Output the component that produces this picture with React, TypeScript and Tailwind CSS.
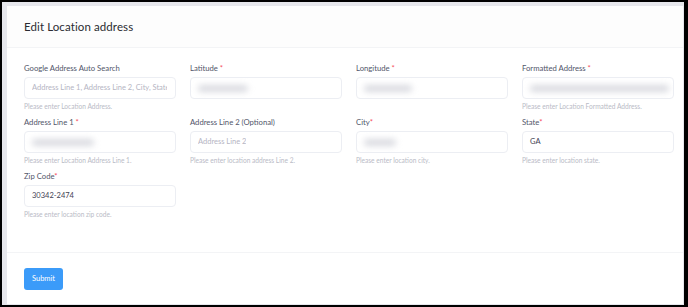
import React from "react";

type Field = {
  label: string;
  req?: "space" | "tight";
  placeholder?: string;
  value?: string;
  blur?: number;
  help?: string;
};

const rows: Field[][] = [
  [
    { label: "Google Address Auto Search", placeholder: "Address Line 1, Address Line 2, City, State", help: "Please enter Location Address." },
    { label: "Latitude", req: "space", blur: 50 },
    { label: "Longitude", req: "space", blur: 48 },
    { label: "Formatted Address", req: "space", blur: 139, help: "Please enter Location Formatted Address." },
  ],
  [
    { label: "Address Line 1", req: "space", blur: 62, help: "Please enter Location Address Line 1." },
    { label: "Address Line 2 (Optional)", placeholder: "Address Line 2", help: "Please enter location address Line 2." },
    { label: "City", req: "tight", blur: 32, help: "Please enter location city." },
    { label: "State", req: "tight", value: "GA", help: "Please enter location state." },
  ],
  [{ label: "Zip Code", req: "tight", value: "30342-2474", help: "Please enter location zip code." }],
];

function FieldView({ f }: { f: Field }) {
  return (
    <div className="flex flex-col">
      <label className="text-[7.7px] leading-[12px] text-[#52566a] h-[12px] whitespace-nowrap">
        {f.label}
        {f.req === "space" && <span className="text-[#f64e60]"> *</span>}
        {f.req === "tight" && <span className="text-[#f64e60]">*</span>}
      </label>
      <div className="mt-[3px] h-[22px] border border-[#eceef3] rounded-[4px] bg-white flex items-center pl-[7px] pr-[8px] overflow-hidden">
        {f.placeholder && (
          <span className="text-[7.5px] text-[#b5b5c3] whitespace-nowrap overflow-hidden">{f.placeholder}</span>
        )}
        {f.value && <span className="text-[7.5px] text-[#3f4254]">{f.value}</span>}
        {f.blur && (
          <div
            className="h-[7px] shrink-0 rounded-full bg-[#d9dae0] blur-[3px]"
            style={{ width: f.blur }}
          />
        )}
      </div>
      <div className="h-[12px] mt-[2px] text-[6.6px] leading-[10px] text-[#b9bbc6] whitespace-nowrap">
        {f.help ?? ""}
      </div>
    </div>
  );
}

export default function App() {
  return (
    <div
      className="w-[688px] h-[307px] bg-black pl-[2px] pt-[2px] pr-[4px] pb-[2px]"
      style={{ fontFamily: "Lato, 'Open Sans', sans-serif" }}
    >
      <div className="w-full h-full bg-[#e6e7ec] pl-[5px] pt-[4px] pr-[1px] pb-[1px]">
        <div className="w-full h-full bg-white flex flex-col">
          <div className="h-[42px] flex items-center px-[17px] border-b border-[#f3f4f6] bg-[#fdfdfd]">
            <h1 className="text-[11.5px] text-[#2a2b31] tracking-[0.1px]">Edit Location address</h1>
          </div>
          <div className="flex-1 px-[17px] pt-[14px] flex flex-col gap-[3px]">
            {rows.map((r, i) => (
              <div key={i} className="grid grid-cols-[repeat(4,152px)] gap-x-[14px]">
                {r.map((f, j) => (
                  <FieldView key={j} f={f} />
                ))}
              </div>
            ))}
          </div>
          <div className="h-[52px] border-t border-[#f3f4f6] px-[17px] flex items-center">
            <button className="w-[39px] h-[22px] rounded-[3px] bg-[#3b9bf9] text-white text-[7.5px]">
              Submit
            </button>
          </div>
        </div>
      </div>
    </div>
  );
}
